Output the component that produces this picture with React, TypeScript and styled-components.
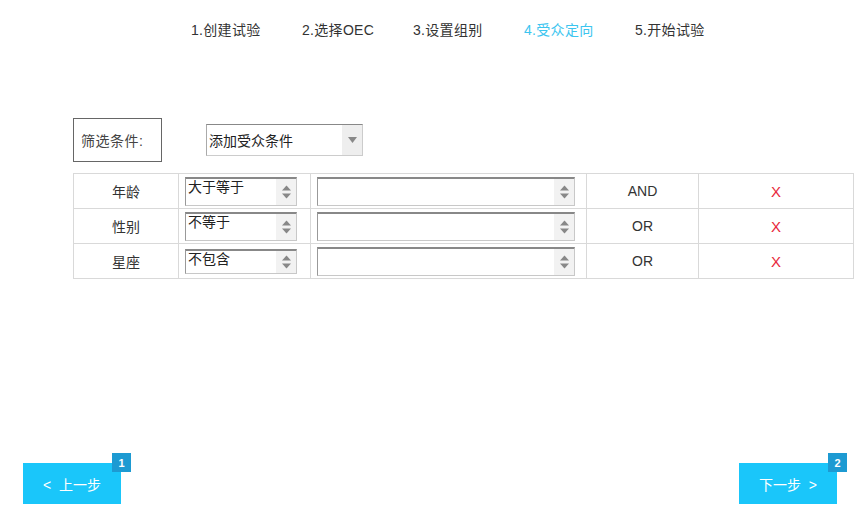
import styled, { createGlobalStyle } from "styled-components";

const GlobalStyle = createGlobalStyle`
  html, body {
    margin: 0;
    padding: 0;
    background: #fff;
    font-family: "Liberation Sans", "Noto Sans CJK SC", sans-serif;
    color: #333;
  }
`;

const steps = ["1.创建试验", "2.选择OEC", "3.设置组别", "4.受众定向", "5.开始试验"];

const rules = [
  { name: "年龄", op: "大于等于", logic: "AND" },
  { name: "性别", op: "不等于", logic: "OR" },
  { name: "星座", op: "不包含", logic: "OR" },
];

const App = () => {
  return (
    <>
      <GlobalStyle />
      <Page>
        {/* 步骤导航 */}
        <StepNav>
          {steps.map((s, i) => (
            <StepItem key={s} active={i === 3}>
              {s}
            </StepItem>
          ))}
        </StepNav>

        {/* 筛选条件 */}
        <FilterRow>
          <FilterLabel>筛选条件:</FilterLabel>
          <AddSelect>
            <AddSelectText>添加受众条件</AddSelectText>
            <AddSelectArrow>
              <svg width="9" height="6" viewBox="0 0 9 6">
                <path d="M0 0 L9 0 L4.5 6 Z" fill="#888" />
              </svg>
            </AddSelectArrow>
          </AddSelect>
        </FilterRow>

        {/* 条件表格 */}
        <RuleTable>
          <colgroup>
            <col style={{ width: 105 }} />
            <col style={{ width: 132 }} />
            <col style={{ width: 276 }} />
            <col style={{ width: 112 }} />
            <col style={{ width: 155 }} />
          </colgroup>
          <tbody>
            {rules.map((r, i) => (
              <tr key={r.name}>
                <NameCell>{r.name}</NameCell>
                <SelectCell>
                  <SpinSelect short={i === 2}>
                    <SpinText>{r.op}</SpinText>
                    <SpinArrows />
                  </SpinSelect>
                </SelectCell>
                <SelectCell>
                  <SpinSelect wide>
                    <SpinText />
                    <SpinArrows />
                  </SpinSelect>
                </SelectCell>
                <LogicCell>{r.logic}</LogicCell>
                <DeleteCell>X</DeleteCell>
              </tr>
            ))}
          </tbody>
        </RuleTable>

        {/* 上一步 / 下一步 */}
        <Footer>
          <StepButton>
            &lt;&nbsp;&nbsp;上一步
            <Badge>1</Badge>
          </StepButton>
          <StepButton>
            下一步&nbsp;&nbsp;&gt;
            <Badge>2</Badge>
          </StepButton>
        </Footer>
      </Page>
    </>
  );
};

const SpinArrows = () => (
  <SpinArrowBox>
    <svg width="9" height="14" viewBox="0 0 9 14">
      <path d="M0 5.5 L4.5 0.5 L9 5.5 Z" fill="#888" />
      <path d="M0 8.5 L9 8.5 L4.5 13.5 Z" fill="#888" />
    </svg>
  </SpinArrowBox>
);

/** 页面整体 */
const Page = styled.div`
  display: flex;
  flex-direction: column;
  height: 519px;
  box-sizing: border-box;
  padding: 19px 10px 15px 23px;
`;

const StepNav = styled.div`
  display: flex;
  padding-left: 168px;
  height: 20px;
  align-items: center;
`;

const StepItem = styled.span<{ active?: boolean }>`
  width: 111px;
  flex-shrink: 0;
  font-size: 14px;
  color: ${(p) => (p.active ? "#3cc5ef" : "#333")};
  white-space: nowrap;
  letter-spacing: 0.3px;
`;

const FilterRow = styled.div`
  display: flex;
  align-items: center;
  margin: 79px 0 0 50px;
  gap: 44px;
`;

const FilterLabel = styled.div`
  box-sizing: border-box;
  width: 89px;
  height: 44px;
  border: 1px solid #666;
  display: flex;
  align-items: center;
  padding-left: 7px;
  font-size: 14px;
  color: #444;
  letter-spacing: 0.5px;
`;

const AddSelect = styled.div`
  display: flex;
  width: 157px;
  height: 32px;
  box-sizing: border-box;
  border: 1px solid #aaa;
  border-top-color: #888;
  border-bottom-color: #ccc;
  border-right-color: #ccc;
`;

const AddSelectText = styled.div`
  flex: 1;
  display: flex;
  align-items: center;
  padding-left: 2px;
  font-size: 14px;
  color: #222;
`;

const AddSelectArrow = styled.div`
  width: 20px;
  background: #eeeeee;
  display: flex;
  align-items: center;
  justify-content: center;
`;

const RuleTable = styled.table`
  margin: 11px 0 0 50px;
  width: 781px;
  border-collapse: collapse;
  table-layout: fixed;

  td {
    border: 1px solid #d9d9d9;
    height: 34px;
    padding: 0;
    font-size: 14px;
    color: #333;
  }
`;

const NameCell = styled.td`
  text-align: center;
`;

const SelectCell = styled.td`
  padding: 0 6px !important;
  vertical-align: middle;
`;

const SpinSelect = styled.div<{ wide?: boolean; short?: boolean }>`
  display: flex;
  width: ${(p) => (p.wide ? "258px" : "112px")};
  height: ${(p) => (p.short ? "25px" : "29px")};
  box-sizing: border-box;
  border: 1px solid #c8c8c8;
  border-top: 2px solid #888;
  border-left-color: #999;
`;

const SpinText = styled.div`
  flex: 1;
  font-size: 14px;
  color: #222;
  padding: 0 0 0 2px;
  line-height: 16px;
`;

const SpinArrowBox = styled.div`
  width: 20px;
  background: #f2f2f2;
  display: flex;
  align-items: center;
  justify-content: center;
`;

const LogicCell = styled.td`
  text-align: center;
`;

const DeleteCell = styled.td`
  text-align: center;
  color: #e8283c !important;
  font-size: 15px !important;
`;

const Footer = styled.div`
  margin-top: auto;
  display: flex;
  justify-content: space-between;
  padding-right: 16px;
`;

const StepButton = styled.button`
  position: relative;
  width: 98px;
  height: 41px;
  border: none;
  background: #1ac6fa;
  color: #fff;
  font-size: 14px;
  font-family: "Liberation Sans", "Noto Sans CJK SC", sans-serif;
  padding: 0;
`;

const Badge = styled.span`
  position: absolute;
  top: -10px;
  right: -10px;
  width: 19px;
  height: 19px;
  background: #1d9ad2;
  color: #fff;
  font-size: 11px;
  font-weight: bold;
  display: flex;
  align-items: center;
  justify-content: center;
`;

export default App;
